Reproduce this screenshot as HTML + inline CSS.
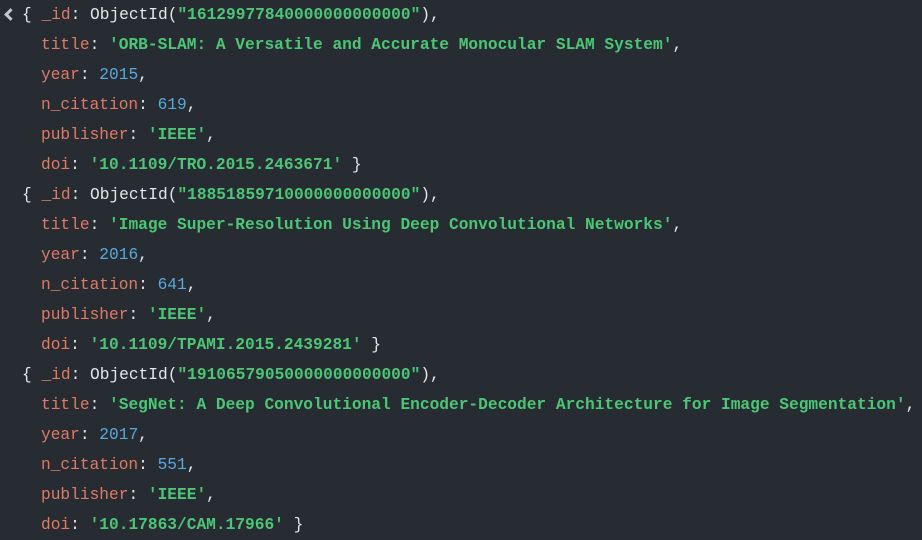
<!DOCTYPE html>
<html><head><style>
html,body{margin:0;padding:0;background:#262c32;width:922px;height:536px;overflow:hidden}
.c{font-family:"Liberation Mono",monospace;font-size:16.2px;color:#e6e6e6;position:absolute;left:0;top:0}
.l{position:absolute;white-space:pre;height:30px;line-height:30px}
.k{color:#df7a64}.s{color:#4cc675;font-weight:bold}.n{color:#58a9dc}
.a{position:absolute;left:6px;top:10px;width:6px;height:6px;border-left:3px solid #c4c8cc;border-bottom:3px solid #c4c8cc;transform:rotate(45deg)}
</style></head><body><div class="c">
<div class="a"></div>
<div class="l" style="left:22px;top:0">{ <span class="k">_id</span>: ObjectId(<span class="s">"16129977840000000000000"</span>),</div>
<div class="l" style="left:41px;top:30px"><span class="k">title</span>: <span class="s">'ORB-SLAM: A Versatile and Accurate Monocular SLAM System'</span>,</div>
<div class="l" style="left:41px;top:60px"><span class="k">year</span>: <span class="n">2015</span>,</div>
<div class="l" style="left:41px;top:90px"><span class="k">n_citation</span>: <span class="n">619</span>,</div>
<div class="l" style="left:41px;top:120px"><span class="k">publisher</span>: <span class="s">'IEEE'</span>,</div>
<div class="l" style="left:41px;top:150px"><span class="k">doi</span>: <span class="s">'10.1109/TRO.2015.2463671'</span> }</div>
<div class="l" style="left:22px;top:180px">{ <span class="k">_id</span>: ObjectId(<span class="s">"18851859710000000000000"</span>),</div>
<div class="l" style="left:41px;top:210px"><span class="k">title</span>: <span class="s">'Image Super-Resolution Using Deep Convolutional Networks'</span>,</div>
<div class="l" style="left:41px;top:240px"><span class="k">year</span>: <span class="n">2016</span>,</div>
<div class="l" style="left:41px;top:270px"><span class="k">n_citation</span>: <span class="n">641</span>,</div>
<div class="l" style="left:41px;top:300px"><span class="k">publisher</span>: <span class="s">'IEEE'</span>,</div>
<div class="l" style="left:41px;top:330px"><span class="k">doi</span>: <span class="s">'10.1109/TPAMI.2015.2439281'</span> }</div>
<div class="l" style="left:22px;top:360px">{ <span class="k">_id</span>: ObjectId(<span class="s">"19106579050000000000000"</span>),</div>
<div class="l" style="left:41px;top:390px"><span class="k">title</span>: <span class="s">'SegNet: A Deep Convolutional Encoder-Decoder Architecture for Image Segmentation'</span>,</div>
<div class="l" style="left:41px;top:420px"><span class="k">year</span>: <span class="n">2017</span>,</div>
<div class="l" style="left:41px;top:450px"><span class="k">n_citation</span>: <span class="n">551</span>,</div>
<div class="l" style="left:41px;top:480px"><span class="k">publisher</span>: <span class="s">'IEEE'</span>,</div>
<div class="l" style="left:41px;top:510px"><span class="k">doi</span>: <span class="s">'10.17863/CAM.17966'</span> }</div>
</div></body></html>
